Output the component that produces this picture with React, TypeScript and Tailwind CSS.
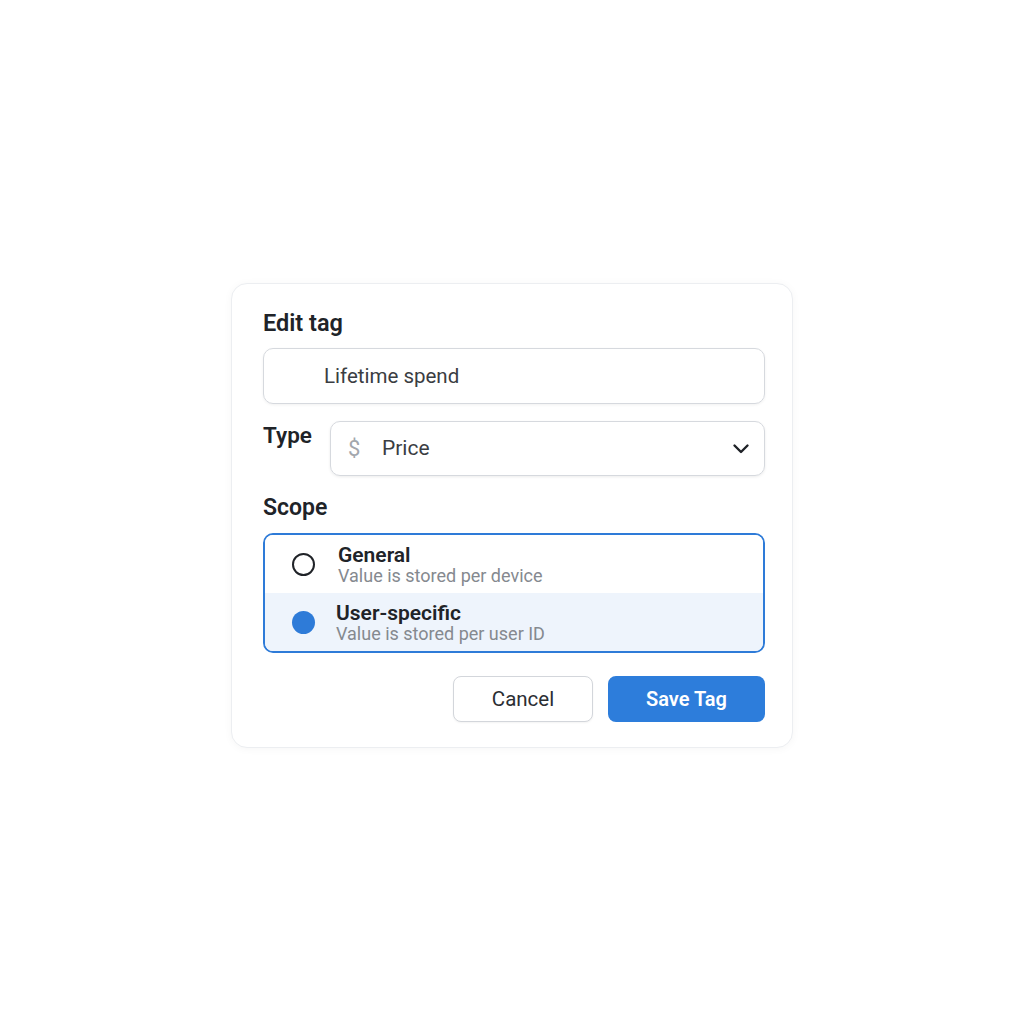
import React from "react";

export default function App() {
  return (
    <div
      className="w-full h-[1024px] bg-white flex justify-center items-start pt-[283px]"
      style={{ fontFamily: "Roboto, 'Noto Sans', sans-serif" }}
    >
      <div className="w-[562px] rounded-[16px] border border-[#eceef1] bg-white shadow-[0_1px_8px_rgba(0,0,0,0.04)] pl-[31px] pr-[27px] pt-[25px] pb-[25px] flex flex-col">
        <div className="text-[23.5px] leading-[28px] font-semibold text-[#202328]">Edit tag</div>

        <div className="mt-[11px] h-[56px] shrink-0 rounded-[10px] border border-[#d6d9de] shadow-[0_1px_3px_rgba(0,0,0,0.06)] flex items-center pl-[60px] text-[20.5px] text-[#3a3d42]">
          Lifetime spend
        </div>

        <div className="mt-[17px] flex items-start">
          <div className="w-[67px] shrink-0 text-[22.5px] leading-[28px] font-semibold text-[#202328]">Type</div>
          <div className="flex-1 h-[55px] rounded-[10px] border border-[#d6d9de] shadow-[0_1px_3px_rgba(0,0,0,0.08)] flex items-center pl-[17px] pr-[14px]">
            <span className="text-[22px] text-[#a3a7ad] w-[14px]">$</span>
            <span className="ml-[20px] text-[21px] text-[#3a3d42] flex-1">Price</span>
            <svg width="18" height="12" viewBox="0 0 18 12" fill="none">
              <path d="M2.5 2.5 L9 9 L15.5 2.5" stroke="#1f2227" strokeWidth="2.4" strokeLinecap="round" strokeLinejoin="round" />
            </svg>
          </div>
        </div>

        <div className="mt-[18px] text-[23px] leading-[28px] font-semibold text-[#202328]">Scope</div>

        <div className="mt-[11px] h-[120px] shrink-0 rounded-[10px] border-2 border-[#2e7bd8] overflow-hidden flex flex-col">
          <div className="h-[58px] flex items-center pl-[27px] bg-white">
            <div className="w-[23px] h-[23px] rounded-full border-2 border-[#202328] shrink-0" />
            <div className="ml-[23px] flex flex-col">
              <div className="text-[21px] leading-[22px] font-semibold text-[#202328]">General</div>
              <div className="text-[18px] leading-[19px] text-[#85898f]">Value is stored per device</div>
            </div>
          </div>
          <div className="flex-1 flex items-center pl-[27px] bg-[#eef4fc]">
            <div className="w-[23px] h-[23px] rounded-full bg-[#2e7bd8] shrink-0" />
            <div className="ml-[21px] flex flex-col">
              <div className="text-[21px] leading-[22px] font-semibold text-[#202328]">User-specific</div>
              <div className="text-[18px] leading-[19px] text-[#85898f]">Value is stored per user ID</div>
            </div>
          </div>
        </div>

        <div className="mt-[23px] flex justify-end gap-[15px]">
          <button className="w-[140px] h-[46px] rounded-[8px] border border-[#d3d6db] bg-white text-[20.5px] text-[#2b2e33] shadow-[0_1px_2px_rgba(0,0,0,0.05)]">
            Cancel
          </button>
          <button className="w-[157px] h-[46px] rounded-[8px] bg-[#2d7ddb] text-[20px] font-semibold text-white">
            Save Tag
          </button>
        </div>
      </div>
    </div>
  );
}
